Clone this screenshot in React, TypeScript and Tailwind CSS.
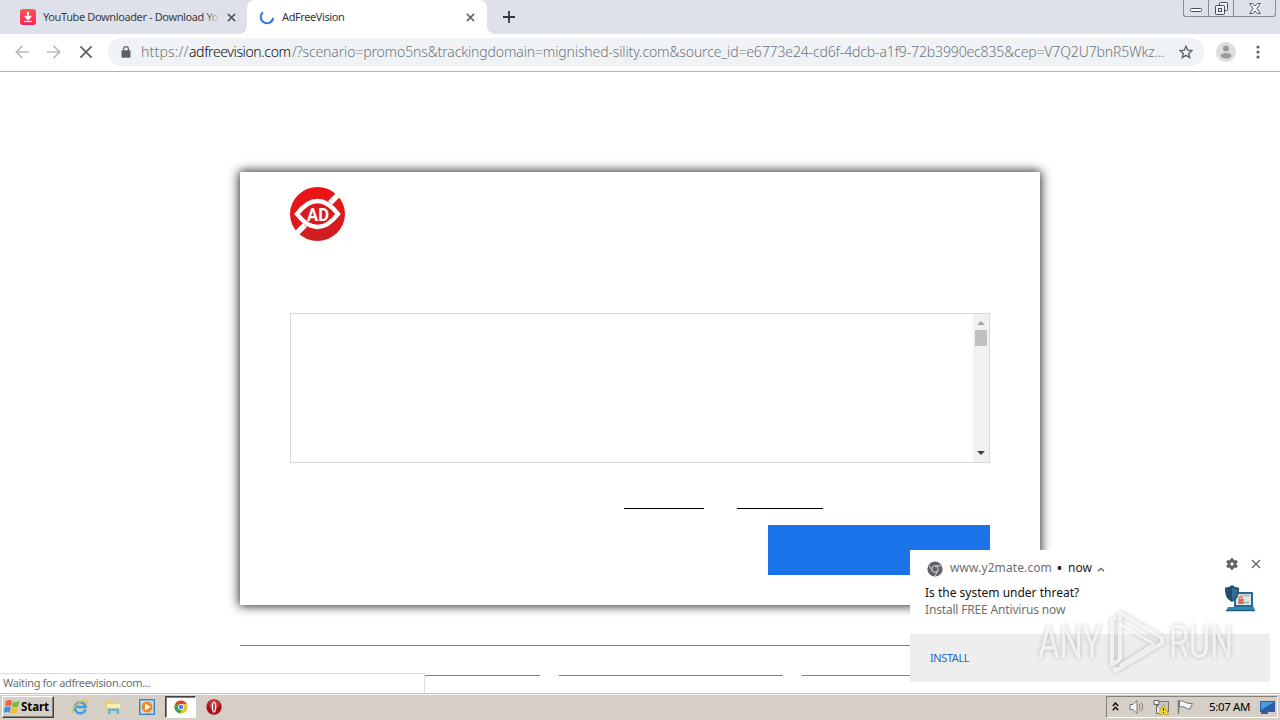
import { ReactNode } from 'react'
import clsx from 'clsx'

const UI_FONT = "font-['Noto_Sans','Open_Sans',sans-serif]"

const CloseGlyph = ({ className }: { className?: string }) => (
  <svg viewBox="0 0 10 10" className={className} fill="none" stroke="currentColor" strokeWidth="1.7">
    <path d="M1 1l8 8M9 1l-8 8" />
  </svg>
)

const TabStrip = () => (
  <div className="flex h-[34px] shrink-0 bg-[#dee1e9]">
    <div className="flex w-[247px] items-center">
      <svg viewBox="0 0 16 16" className="ml-5 h-4 w-4 shrink-0">
        <defs>
          <linearGradient id="dl" x1="0" y1="0" x2="0" y2="1">
            <stop offset="0" stopColor="#ff5a4e" />
            <stop offset="1" stopColor="#f81f55" />
          </linearGradient>
        </defs>
        <rect width="16" height="16" rx="3" fill="url(#dl)" />
        <path d="M8 3v6M5 7l3 3 3-3" stroke="#fff" strokeWidth="2" fill="none" />
        <path d="M4 12.5h8" stroke="#fff" strokeWidth="1.3" />
      </svg>
      <div className="relative ml-[7px] w-[178px] whitespace-nowrap text-[11px] leading-4 tracking-[-0.38px] text-[#3c4043]">
        YouTube Downloader - Download Yo
        <div className="absolute inset-y-0 right-0 w-[18px] bg-linear-to-r from-transparent to-[#dee1e9]" />
      </div>
      <CloseGlyph className="ml-[6px] h-[9px] w-[9px] text-[#54585d]" />
    </div>
    <div className="relative flex w-[240px] items-center rounded-t-lg bg-white">
      <svg viewBox="0 0 16 16" className="ml-3 h-4 w-4 shrink-0" fill="none" stroke="#2f74e0" strokeWidth="2">
        <path d="M4 3.3A6.2 6.2 0 1 0 14.1 9" />
      </svg>
      <span className="ml-[7px] w-[184px] text-[11px] leading-4 tracking-[-0.4px] text-[#34373b]">AdFreeVision</span>
      <CloseGlyph className="h-[9px] w-[9px] text-[#5f6368]" />
      <div className="absolute -left-2 bottom-0 h-2 w-2 bg-white">
        <div className="h-2 w-2 rounded-br-lg bg-[#dee1e9]" />
      </div>
      <div className="absolute -right-2 bottom-0 h-2 w-2 bg-white">
        <div className="h-2 w-2 rounded-bl-lg bg-[#dee1e9]" />
      </div>
    </div>
    <svg viewBox="0 0 12 12" className="ml-4 mt-[11px] h-3 w-3" stroke="#35383d" strokeWidth="1.8">
      <path d="M6 0v12M0 6h12" />
    </svg>
    <div className="ml-auto mr-1 flex h-[17px] rounded-b-[3px] border border-t-0 border-[#858b97] text-[#464b55]">
      <div className="flex w-[25px] justify-center border-r border-[#858b97]">
        <svg viewBox="0 0 12 4" className="mt-2 h-1 w-3" fill="#fff" stroke="currentColor">
          <rect x=".5" y=".5" width="11" height="3" rx="1" />
        </svg>
      </div>
      <div className="flex w-[25px] justify-center border-r border-[#858b97]">
        <svg viewBox="0 0 13 13" className="mt-[2px] h-[13px] w-[13px]" fill="#eef0f4" stroke="currentColor">
          <rect x="4.5" y=".5" width="8" height="8" rx="1" />
          <rect x=".5" y="3.5" width="9" height="9" rx="1" />
          <rect x="3.5" y="6.5" width="3" height="3" />
        </svg>
      </div>
      <div className="flex w-[41px] justify-center">
        <svg viewBox="0 0 12 11" className="mt-[3px] h-[11px] w-3" fill="#f4f5f8" stroke="currentColor" strokeWidth=".9">
          <path d="M.7.5h3L6 3 8.300.5h3L7.900 5.500l3.400 5h-3L6 8l-2.300 2.500h-3l3.400-5z" />
        </svg>
      </div>
    </div>
  </div>
)

const Toolbar = () => (
  <div className="flex h-[38px] shrink-0 items-center border-b border-[#b3b4b5] bg-white pb-px">
    <svg viewBox="0 0 14 14" className="ml-[15px] h-[14px] w-[14px]" fill="none" stroke="#b9bbbe" strokeWidth="1.7">
      <path d="M14 7H1.500M7.500.8L1.300 7l6.200 6.200" />
    </svg>
    <svg viewBox="0 0 14 14" className="ml-[18px] h-[14px] w-[14px]" fill="none" stroke="#b9bbbe" strokeWidth="1.7">
      <path d="M0 7h12.500M6.500.8L12.700 7l-6.200 6.200" />
    </svg>
    <CloseGlyph className="ml-[18px] h-[14px] w-[14px] text-[#5f6368] [stroke-width:1.3]" />
    <div className="ml-[15px] flex h-7 w-[1096px] items-center rounded-full bg-[#f0f3f5]">
      <svg viewBox="0 0 10 12" className="ml-[13px] h-3 w-[10px] shrink-0">
        <rect x=".5" y="4.300" width="9" height="7.500" rx="1" fill="#5f6368" />
        <path d="M2.600 5V3a2.400 2.400 0 0 1 4.800 0v2" fill="none" stroke="#5f6368" strokeWidth="1.200" />
      </svg>
      <div className="ml-[10px] flex w-[1025px] whitespace-nowrap text-[14px] font-light leading-5 text-[#6f757b]">
        <span className="w-12 tracking-[0.2px]">https://</span>
        <span className="w-[103px] tracking-[-0.38px] text-[#0c0d0f]">adfreevision.com</span>
        <span className="tracking-[-0.135px]">
          /?scenario=promo5ns&trackingdomain=mignished-sility.com&source_id=e6773e24-cd6f-4dcb-a1f9-72b3990ec835&cep=V7Q2U7bnR5Wkz...
        </span>
      </div>
      <svg viewBox="0 0 14 14" className="ml-[13px] h-[14px] w-[14px] shrink-0" fill="none" stroke="#5f6368" strokeWidth="1.400">
        <path d="M7 1.300l1.700 3.900 4.200.4-3.200 2.800 1 4.200L7 10.400l-3.700 2.200 1-4.200L1.100 5.600l4.200-.4z" />
      </svg>
    </div>
    <svg viewBox="0 0 20 20" className="ml-3 h-5 w-5">
      <circle cx="10" cy="10" r="10" fill="#dedede" />
      <circle cx="10" cy="6.500" r="3" fill="#9a9b9c" />
      <ellipse cx="10" cy="13.800" rx="5.500" ry="2.800" fill="#9a9b9c" />
    </svg>
    <svg viewBox="0 0 4 14" className="ml-[20px] h-[14px] w-1" fill="#5f6368">
      <circle cx="2" cy="2" r="1.600" />
      <circle cx="2" cy="7" r="1.600" />
      <circle cx="2" cy="12" r="1.600" />
    </svg>
  </div>
)

const AdLogo = () => (
  <svg viewBox="0 0 55 54" className="h-[54px] w-[55px]">
    <defs>
      <linearGradient id="ad" x1="0" y1="0" x2="0" y2="1">
        <stop offset="0" stopColor="#f01214" />
        <stop offset="1" stopColor="#cd2023" />
      </linearGradient>
    </defs>
    <ellipse cx="27.500" cy="27" rx="27.500" ry="27" fill="url(#ad)" />
    <path d="M51 5L40 16M15 38L4 49" stroke="#fff" strokeWidth="5.500" />
    <path d="M7 27Q17 14 27.500 14T48 27Q38 40 27.500 40T7 27z" fill="#d81c1e" stroke="#fff" strokeWidth="4.500" />
    <text x="17" y="33.500" textLength="22" lengthAdjust="spacingAndGlyphs" fontFamily="Roboto, sans-serif" fontWeight="700" fontSize="18.500" fill="#fff">
      AD
    </text>
  </svg>
)

const PageContent = () => (
  <div className="flex-1 overflow-hidden bg-white pt-[100px]">
    <div className="mx-auto flex h-[433px] w-[800px] flex-col bg-white px-[50px] pt-[15px] shadow-[0_0_10px_1px_rgba(0,0,0,0.85)]">
      <AdLogo />
      <div className="mt-[72px] flex h-[150px] justify-end border border-[#d9d9d9]">
        <div className="flex w-4 flex-col items-center bg-[#f1f1f1]">
          <svg viewBox="0 0 8 4" className="mt-[7px] h-1 w-2 shrink-0" fill="#a3a3a3">
            <path d="M0 4l4-4 4 4z" />
          </svg>
          <div className="mt-[5px] h-4 w-3 bg-[#c1c1c1]" />
          <svg viewBox="0 0 8 4" className="mb-[7px] mt-auto h-1 w-2 shrink-0" fill="#404040">
            <path d="M0 0l4 4 4-4z" />
          </svg>
        </div>
      </div>
      <div className="ml-[334px] mt-[45px] flex gap-[33px]">
        <div className="h-px w-[80px] bg-black" />
        <div className="h-px w-[86px] bg-black" />
      </div>
      <div className="mt-4 h-[50px] w-[222px] self-end bg-[#1a73e8]" />
    </div>
    <div className="mx-auto mt-10 h-px w-[800px] bg-[#808080]" />
    <div className="ml-[316px] mt-[29px] flex gap-[19px]">
      <div className="h-px w-[224px] bg-[#808080]" />
      <div className="h-px w-[224px] bg-[#808080]" />
      <div className="h-px w-[224px] bg-[#808080]" />
    </div>
  </div>
)

const ShieldLaptop = () => (
  <svg viewBox="0 0 32 28" className="h-7 w-8">
    <rect x="10" y="7" width="19" height="15" fill="#286b94" />
    <rect x="12" y="9" width="15" height="11" fill="#d9e6e7" />
    <path d="M13 13l5-2.500h8" fill="none" stroke="#f0a183" strokeWidth="1.500" />
    <path d="M14 17.500h11" stroke="#8fb4c2" strokeWidth="1.500" />
    <path d="M15.500 14.500v-1a1.500 1.500 0 0 1 3 0v1" stroke="#d84f33" fill="none" />
    <rect x="14.500" y="14" width="5" height="5" fill="#e56742" />
    <path d="M4 22h26l1 4H2z" fill="#3288ae" />
    <path d="M2 25.500h29" stroke="#1d6186" strokeWidth="1.500" />
    <path d="M8 0c2.500 2 4.500 2.500 7 2.500 0 8-1.500 11.500-7 14.500C2.500 14 1 10.500 1 2.500 3.500 2.500 5.500 2 8 0z" fill="#214d6b" />
    <path d="M8 2c2 1.400 3.500 1.900 5.500 2C13.300 10 12 13 8 15.500z" fill="#316f91" />
  </svg>
)

const Notification = () => (
  <div className="absolute left-[910px] top-[550px] flex h-[132px] w-[360px] flex-col bg-white">
    <div className="relative h-[84px] pl-[15px]">
      <div className="flex h-9 items-center pl-[2px]">
        <svg viewBox="0 0 16 16" className="mt-px h-4 w-4" fill="none" stroke="#d5d7d9" strokeWidth="1">
          <circle cx="8" cy="8" r="7.600" fill="#5f6368" stroke="none" />
          <circle cx="8" cy="8" r="3.200" />
          <path d="M8 4.800h6.500M5.200 9.600L2 4.500M10.800 9.600L8 15" />
        </svg>
        <span className="ml-[7px] w-[102px] whitespace-nowrap text-[12px] tracking-[0.1px] text-[#6b6f74]">www.y2mate.com</span>
        <span className="ml-[4px] w-[7px] text-center text-[16px] leading-4 text-[#202124]">•</span>
        <span className="ml-[5px] w-6 text-[12px] text-[#202124]">now</span>
        <svg viewBox="0 0 8 5" className="ml-[5px] mt-[2px] h-[5px] w-2" fill="none" stroke="#5f6368" strokeWidth="1.300">
          <path d="M1 4.300l3-3 3 3" />
        </svg>
      </div>
      <p className="text-[12px] leading-[14px] text-[#111]">Is the system under threat?</p>
      <p className="mt-[3px] text-[12px] leading-[14px] tracking-[-0.17px] text-[#6f6f6f]">Install FREE Antivirus now</p>
      <svg viewBox="0 0 24 24" className="absolute left-[315px] top-[7px] h-[14px] w-[14px]" fill="#5f6368">
        <path d="M19.430 12.980c.04-.32.07-.64.07-.98s-.03-.66-.07-.98l2.110-1.650c.19-.15.24-.42.12-.64l-2-3.460c-.12-.22-.39-.3-.61-.22l-2.490 1c-.52-.4-1.080-.73-1.690-.98l-.38-2.650A.488.488 0 0 0 14 2h-4c-.25 0-.46.18-.49.42l-.38 2.650c-.61.25-1.170.59-1.690.98l-2.490-1c-.23-.09-.49 0-.61.22l-2 3.460c-.13.22-.07.49.12.64l2.110 1.650c-.04.32-.07.65-.07.98s.03.66.07.98l-2.110 1.650c-.19.15-.24.42-.12.64l2 3.460c.12.22.39.3.61.22l2.490-1c.52.4 1.080.73 1.690.98l.38 2.650c.03.24.24.42.49.42h4c.25 0 .46-.18.49-.42l.38-2.650c.61-.25 1.170-.59 1.690-.98l2.490 1c.23.09.49 0 .61-.22l2-3.460c.12-.22.07-.49-.12-.64l-2.110-1.650zM12 14.800a2.800 2.800 0 1 1 0-5.600 2.800 2.800 0 0 1 0 5.600z" />
      </svg>
      <CloseGlyph className="absolute left-[341px] top-[9px] h-[10px] w-[10px] text-[#5f6368] [stroke-width:1.3]" />
      <div className="absolute left-[314px] top-[35px]">
        <ShieldLaptop />
      </div>
    </div>
    <div className="flex h-12 items-center bg-[#eeeeee] pl-[20px]">
      <span className="text-[11px] tracking-[-0.4px] text-[#2169c7]">INSTALL</span>
    </div>
  </div>
)

const Watermark = () => (
  <svg
    viewBox="0 0 220 70"
    className="absolute left-[1035px] top-[606px] h-[70px] w-[220px] overflow-visible drop-shadow-[0_0_2px_rgba(0,0,0,0.32)]"
    fill="#ffffff"
    fillOpacity="0.7"
    fontFamily="Roboto, sans-serif"
    fontWeight="400"
    fontSize="47"
  >
    <text x="3" y="52" textLength="64" lengthAdjust="spacingAndGlyphs">ANY</text>
    <text x="134" y="52" textLength="64" lengthAdjust="spacingAndGlyphs">RUN</text>
    <g fill="none" stroke="#ffffff" strokeOpacity="0.7" strokeWidth="4" strokeLinejoin="round">
      <path d="M82 12l-5 2v44l8-4" />
      <path d="M85 54V7l42 25v5L80 65v-4" />
      <path d="M85 18l34 20-34 21" strokeWidth="2.500" />
    </g>
  </svg>
)

const TaskIcon = ({ children, className }: { children: ReactNode; className?: string }) => (
  <svg viewBox="0 0 16 16" className={clsx('shrink-0', className)}>
    {children}
  </svg>
)

const Taskbar = () => (
  <div className="flex h-[27px] shrink-0 items-center border-t border-[#c9c5bb] bg-[#d6cfc7] shadow-[inset_0_1px_0_#f7f4ef]">
    <div className="ml-[2px] flex h-[22px] w-[52px] items-center border border-b-[#404040] border-l-white border-r-[#404040] border-t-white bg-[#d6cfc7] shadow-[inset_-1px_-1px_0_#85817b]">
      <TaskIcon className="ml-px h-4 w-4">
        <path d="M2 2q3-2 6 0L7 7.500Q4 5.500 1 7.500z" fill="#ec6538" />
        <path d="M9 2.500q3 1.500 6.500-.5L14 7.500Q11 9 8 7.500z" fill="#74b843" />
        <path d="M.8 8.500q3-2 6 0l-1 5.500Q3 12-.5 14z" fill="#4a8ddc" />
        <path d="M7.800 8.500q3 1.500 6 0l-1.300 5.500Q10 15.500 6.700 14z" fill="#f5bd2e" />
      </TaskIcon>
      <span className="ml-px text-[11.5px] font-bold leading-4 tracking-[-0.1px] text-black">Start</span>
    </div>
    <TaskIcon className="ml-[18px] h-4 w-4">
      <path d="M13.500 10.500A5.500 5.500 0 1 1 13.700 8H4" fill="none" stroke="#3d9fdf" strokeWidth="2.500" />
      <path d="M1 14C-1 10 9-1 15 2c1 1 0 3-1 4" fill="none" stroke="#e9bd43" strokeWidth="1.300" />
    </TaskIcon>
    <TaskIcon className="ml-[17px] h-4 w-4">
      <path d="M1 1.500h5l1 2h7V13H1z" fill="#e8cf74" />
      <path d="M2 5h13v4H2z" fill="#fbf0b3" />
      <path d="M3 15V9.500h11V15h-2.500v-3h-6v3z" fill="#67b5d9" />
    </TaskIcon>
    <TaskIcon className="ml-[18px] h-4 w-4">
      <rect x=".5" y=".5" width="15" height="15" fill="#85b6df" stroke="#4380b7" />
      <rect x="2" y="2" width="12" height="12" fill="#c7dff0" />
      <circle cx="8" cy="8" r="5.500" fill="#ee8b22" />
      <path d="M6 4.500v7L11.500 8z" fill="#fff" />
    </TaskIcon>
    <div className="ml-[10px] flex h-[22px] w-[31px] items-center justify-center border border-b-white border-l-[#404040] border-r-white border-t-[#404040] bg-white shadow-[inset_1px_1px_0_#85817b]">
      <TaskIcon className="h-[14px] w-[14px]">
        <circle cx="8" cy="8" r="7.500" fill="#e9c52f" />
        <path d="M8 8L1.500 4.200A7.500 7.500 0 0 1 14.500 4.500H8z" fill="#db4636" />
        <path d="M1.500 4.200L8 8l1 3-2 4.400A7.500 7.500 0 0 1 1.500 4.200z" fill="#3fa252" />
        <circle cx="8" cy="8" r="3.500" fill="#fff" />
        <circle cx="8" cy="8" r="2.700" fill="#4283e4" />
      </TaskIcon>
    </div>
    <TaskIcon className="ml-[10px] h-4 w-4">
      <circle cx="8" cy="8" r="7.700" fill="#a81318" />
      <ellipse cx="8" cy="5" rx="5.500" ry="4" fill="#cf4a4a" opacity=".7" />
      <ellipse cx="8" cy="8" rx="2.400" ry="5.700" fill="#fff" />
      <ellipse cx="8" cy="8" rx=".8" ry="4.500" fill="#a81318" />
    </TaskIcon>
    <div className="ml-auto mr-[2px] flex h-[22px] w-[172px] items-center border border-b-white border-l-[#85817b] border-r-white border-t-[#85817b]">
      <svg viewBox="0 0 7 9" className="mb-px ml-[5px] h-[9px] w-[7px]" fill="none" stroke="#111" strokeWidth="1.500">
        <path d="M.8 4l2.700-3 2.700 3M.8 8.300l2.700-3 2.700 3" />
      </svg>
      <TaskIcon className="ml-[10px] h-4 w-4">
        <path d="M1 5.500h3L8 1.500v13l-4-4H1z" fill="#f5f5f5" stroke="#777" />
        <path d="M10 5q2 3 0 6M12 3.500q3.500 4.500 0 9" fill="none" stroke="#858585" />
      </TaskIcon>
      <TaskIcon className="ml-2 h-4 w-4">
        <rect x="4.500" y="2.500" width="11" height="10" fill="#c7c7c7" stroke="#777" />
        <path d="M1 1.500h5v4H1zM3.500 6v8.500H8" fill="#eee" stroke="#666" />
        <path d="M10.500 5.500l5.300 9.800H5.200z" fill="#f5d934" stroke="#b19319" strokeWidth=".7" />
        <path d="M10.500 9v3M10.500 13v1" stroke="#222" />
      </TaskIcon>
      <TaskIcon className="ml-2 h-4 w-4">
        <path d="M1.500 1v14" stroke="#777" strokeWidth="1.500" />
        <path d="M2.500 2q3-.5 5 1 3 2 8 1.500L13 10q-3 .5-5-1.500-2-1.500-5.500-.5z" fill="#f7f7f7" stroke="#777" />
      </TaskIcon>
      <span className="ml-4 w-[42px] whitespace-nowrap text-[11.5px] leading-4 tracking-[-0.35px] text-black">5:07 AM</span>
      <TaskIcon className="ml-[8px] h-4 w-4">
        <path d="M1 2h15v11H1z" fill="#295fa5" />
        <path d="M2 3h13L2 11z" fill="#4f9ae0" />
        <path d="M2 14h7" stroke="#163e79" strokeWidth="1.500" />
      </TaskIcon>
    </div>
  </div>
)

const App = () => (
  <div className={clsx('relative flex h-[720px] w-[1280px] flex-col overflow-hidden bg-white', UI_FONT)}>
    <TabStrip />
    <Toolbar />
    <PageContent />
    <Taskbar />

    {/* Loading status bubble */}
    <div className="absolute left-0 top-[673px] flex h-5 w-[425px] items-center border-r border-t border-[#dadce0] bg-white pb-px pl-[3px]">
      <span className="text-[11px] leading-4 tracking-[-0.33px] text-[#6b6f74]">Waiting for adfreevision.com...</span>
    </div>

    <Notification />
    <Watermark />
  </div>
)

export default App
